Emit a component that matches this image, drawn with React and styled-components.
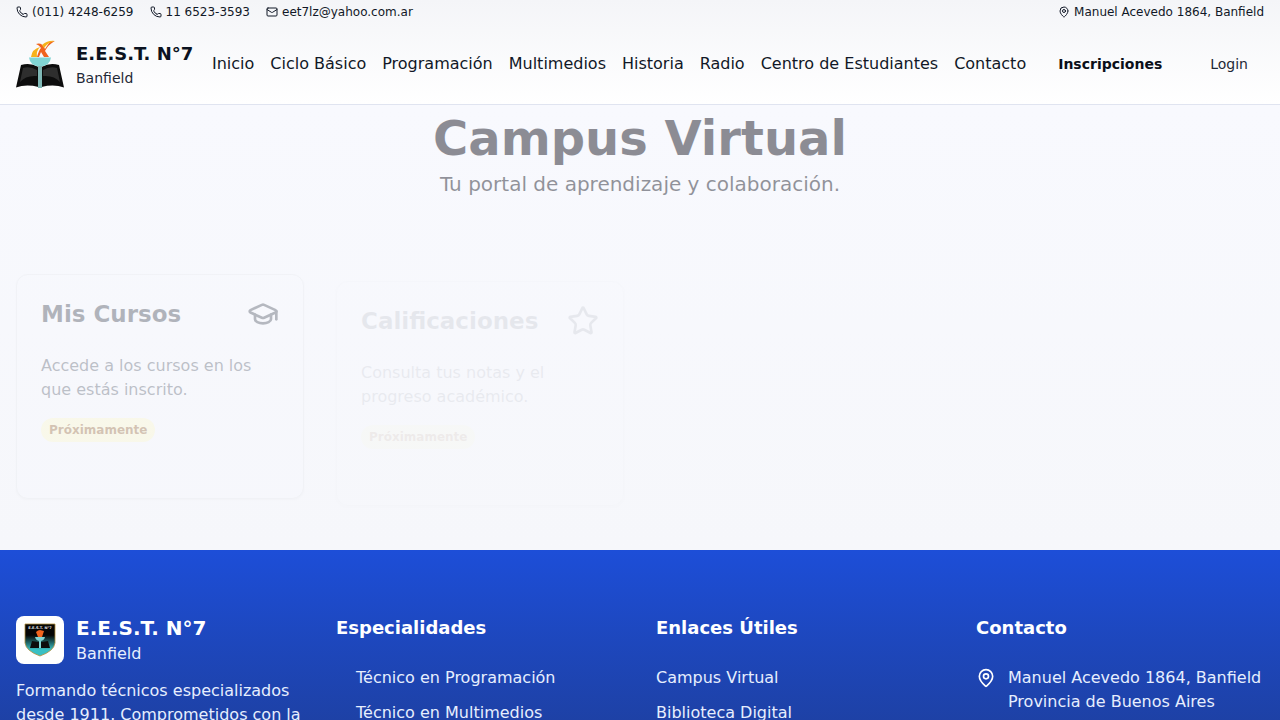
import React from "react";
import styled, { createGlobalStyle } from "styled-components";
import { GraduationCap, Mail, MapPin, Phone, Star } from "lucide-react";

const GlobalStyle = createGlobalStyle`
  * {
    box-sizing: border-box;
  }
  html,
  body {
    margin: 0;
    padding: 0;
    background: #f8f9fd;
    font-family: "DejaVu Sans", sans-serif;
    color: #111827;
  }
`;

const HeaderWrap = styled.header`
  background: linear-gradient(180deg, #f4f5f8 0%, #ffffff 100%);
  border-bottom: 1px solid #e0e4f0;
`;

const TopBar = styled.div`
  display: flex;
  justify-content: space-between;
  align-items: center;
  height: 24px;
  padding: 0 16px;
  font-size: 12px;
  color: #111827;
`;

const TopGroup = styled.div`
  display: flex;
  gap: 16px;
`;

const TopItem = styled.span`
  display: flex;
  align-items: center;
  gap: 4px;
`;

const NavBar = styled.nav`
  display: flex;
  align-items: center;
  height: 80px;
  padding: 0 16px;
`;

const Brand = styled.div`
  display: flex;
  align-items: center;
  gap: 12px;
  width: 196px;
`;

const BrandText = styled.div`
  display: flex;
  flex-direction: column;
`;

const BrandName = styled.span`
  font-size: ${({ $large }) => ($large ? "20px" : "18px")};
  line-height: 28px;
  font-weight: 700;
  color: ${({ $large }) => ($large ? "#ffffff" : "#0b1220")};
`;

const BrandPlace = styled.span`
  font-size: ${({ $large }) => ($large ? "16px" : "14px")};
  line-height: ${({ $large }) => ($large ? "24px" : "20px")};
  color: ${({ $large }) => ($large ? "#e6eefe" : "#1f2937")};
`;

const NavLinks = styled.div`
  display: flex;
  gap: 16px;
  font-size: 16px;
`;

const NavLink = styled.a`
  color: #111827;
  line-height: 24px;
`;

const NavActions = styled.div`
  display: flex;
  align-items: center;
  margin-left: auto;
  font-size: 14px;
  padding-right: 16px;
`;

const EnrollLink = styled.a`
  font-weight: 700;
  color: #0b0f19;
  margin-right: 48px;
`;

const LoginLink = styled.a`
  color: #1f2937;
`;

const Main = styled.main`
  height: 445px;
  padding: 9px 16px 0;
  background: linear-gradient(180deg, #f8f9fe 0%, #f6f7fb 100%);
`;

const Hero = styled.section`
  text-align: center;
  opacity: 0.47;
`;

const HeroTitle = styled.h1`
  margin: 0;
  font-size: 48px;
  line-height: 48px;
  font-weight: 700;
  color: #14141f;
`;

const HeroSub = styled.p`
  margin: 8px 0 0;
  font-size: 20px;
  line-height: 28px;
  color: #1d1f2c;
`;

const CardGrid = styled.div`
  display: grid;
  grid-template-columns: repeat(4, 1fr);
  gap: 32px;
  margin-top: 76px;
`;

const Card = styled.article`
  height: 225px;
  padding: 24px;
  background: #f9faff;
  border: 1px solid #e5e7eb;
  border-radius: 12px;
  box-shadow: 0 1px 2px rgba(0, 0, 0, 0.05);
  opacity: ${({ $fade }) => $fade};
  transform: translateY(${({ $shift }) => $shift}px);
`;

const CardHead = styled.div`
  display: flex;
  justify-content: space-between;
  align-items: center;
  height: 30px;
  margin-bottom: 25px;
  color: #1f2937;
`;

const CardTitle = styled.h2`
  margin: 0;
  font-size: 23px;
  line-height: 32px;
  font-weight: 700;
  color: #111827;
`;

const CardText = styled.p`
  margin: 0 0 16px;
  font-size: 16px;
  line-height: 24px;
  color: #374151;
`;

const Badge = styled.span`
  display: inline-block;
  padding: 0 8px;
  height: 24px;
  line-height: 24px;
  border-radius: 999px;
  background: #fef9c3;
  color: #854d0e;
  font-size: 12px;
  font-weight: 700;
`;

const Footer = styled.footer`
  padding: 66px 16px 48px;
  background: linear-gradient(180deg, #1d4ed8 0, #1e3a8a 265px);
  color: #e6eefe;
`;

const FooterGrid = styled.div`
  display: grid;
  grid-template-columns: repeat(4, 1fr);
  gap: 32px;
`;

const FooterBrand = styled.div`
  display: flex;
  align-items: center;
  gap: 12px;
  margin: 0 0 13px;
`;

const LogoTile = styled.div`
  display: flex;
  align-items: center;
  justify-content: center;
  width: 48px;
  height: 48px;
  background: #ffffff;
  border-radius: 8px;
`;

const FooterText = styled.p`
  margin: 0;
  font-size: 16px;
  line-height: 24px;
`;

const BrandColumn = styled.div`
  margin-top: -2px;
`;

const FooterTitle = styled.h3`
  margin: 0 0 26px;
  font-size: 18px;
  line-height: 24px;
  font-weight: 700;
  color: #ffffff;
`;

const FooterList = styled.ul`
  list-style: none;
  margin: 0;
  padding: 0 0 0 ${({ $indent }) => ($indent ? "20px" : "0")};
  display: flex;
  flex-direction: column;
  gap: 11px;
  font-size: 16px;
  line-height: 24px;
`;

const ContactRow = styled.div`
  display: flex;
  gap: 12px;
  font-size: 16px;
  line-height: 24px;
  & > svg {
    flex: none;
    margin-top: 2px;
    color: #ffffff;
  }
`;

function BookLogo() {
  return (
    <svg width="48" height="48" viewBox="0 0 48 48">
      <path d="M0 47.5 L5 25 Q14 22 22.5 27 L22.5 47 Q10 44 0 47.5Z" fill="#0d0d0d" />
      <path d="M48 47.5 L43 25 Q34 22 25.5 27 L25.5 47 Q38 44 48 47.5Z" fill="#0d0d0d" />
      <path d="M4 42 L7 28 Q14 26 21 30 L21 36 Q10 35 4 42Z" fill="#2e2e2e" />
      <path d="M44 42 L41 28 Q34 26 27 30 L27 36 Q38 35 44 42Z" fill="#2e2e2e" />
      <path d="M13 17.5 H35 Q34 26 24 26.5 Q14 26 13 17.5Z" fill="#80d5d4" />
      <rect x="22" y="26" width="4" height="23" fill="#7fb8b6" />
      <path d="M15 17 Q16 9 24 7 Q20 11 21 17Z" fill="#f6b21b" />
      <path d="M20 4 Q26 2 29 9 L34 1.5 Q40 0.5 38 1.5 Q32 5 29 11 L33 17 H28 L25 12 L23 17 H21 Q23 10 25 8 Q23 5 20 4Z" fill="#f0641e" />
      <path d="M26 5 Q32 0 39 1 Q32 2 28 8Z" fill="#f6b21b" />
    </svg>
  );
}

function ShieldLogo() {
  return (
    <svg width="32" height="34" viewBox="0 0 32 34">
      <defs>
        <linearGradient id="shieldFill" x1="0" y1="0" x2="0" y2="1">
          <stop offset="0.35" stopColor="#060606" />
          <stop offset="0.8" stopColor="#39c0c4" />
        </linearGradient>
      </defs>
      <path d="M1 1 H31 V20 Q30 28 16 33 Q2 28 1 20Z" fill="url(#shieldFill)" stroke="#b08d3a" strokeWidth="0.8" />
      <text x="16" y="6" textAnchor="middle" fontSize="3.6" fontWeight="700" fill="#e8e8e8">E.E.S.T. N°7</text>
      <path d="M12 9 Q14 7 16 7 L20 8 L18 14 H14Z" fill="#f0641e" />
      <path d="M11 14 H21 Q20 18 16 18 Q12 18 11 14Z" fill="#80d5d4" />
      <rect x="15" y="18" width="2" height="7" fill="#80d5d4" />
      <path d="M6 25 L8 18 L15 19 V25Z M26 25 L24 18 L17 19 V25Z" fill="#0d0d0d" />
    </svg>
  );
}

export default function App() {
  return (
    <>
      <GlobalStyle />
      <HeaderWrap>
        <TopBar>
          <TopGroup>
            <TopItem>
              <Phone size={12} />
              (011) 4248-6259
            </TopItem>
            <TopItem>
              <Phone size={12} />
              11 6523-3593
            </TopItem>
            <TopItem>
              <Mail size={12} />
              eet7lz@yahoo.com.ar
            </TopItem>
          </TopGroup>
          <TopItem>
            <MapPin size={12} />
            Manuel Acevedo 1864, Banfield
          </TopItem>
        </TopBar>
        <NavBar>
          <Brand>
            <BookLogo />
            <BrandText>
              <BrandName>E.E.S.T. N°7</BrandName>
              <BrandPlace>Banfield</BrandPlace>
            </BrandText>
          </Brand>
          <NavLinks>
            <NavLink>Inicio</NavLink>
            <NavLink>Ciclo Básico</NavLink>
            <NavLink>Programación</NavLink>
            <NavLink>Multimedios</NavLink>
            <NavLink>Historia</NavLink>
            <NavLink>Radio</NavLink>
            <NavLink>Centro de Estudiantes</NavLink>
            <NavLink>Contacto</NavLink>
          </NavLinks>
          <NavActions>
            <EnrollLink>Inscripciones</EnrollLink>
            <LoginLink>Login</LoginLink>
          </NavActions>
        </NavBar>
      </HeaderWrap>
      <Main>
        <Hero>
          <HeroTitle>Campus Virtual</HeroTitle>
          <HeroSub>Tu portal de aprendizaje y colaboración.</HeroSub>
        </Hero>
        <CardGrid>
          <Card $fade={0.3} $shift={0}>
            <CardHead>
              <CardTitle>Mis Cursos</CardTitle>
              <GraduationCap size={32} />
            </CardHead>
            <CardText>Accede a los cursos en los que estás inscrito.</CardText>
            <Badge>Próximamente</Badge>
          </Card>
          <Card $fade={0.07} $shift={7}>
            <CardHead>
              <CardTitle>Calificaciones</CardTitle>
              <Star size={32} />
            </CardHead>
            <CardText>Consulta tus notas y el progreso académico.</CardText>
            <Badge>Próximamente</Badge>
          </Card>
        </CardGrid>
      </Main>
      <Footer>
        <FooterGrid>
          <BrandColumn>
            <FooterBrand>
              <LogoTile>
                <ShieldLogo />
              </LogoTile>
              <BrandText>
                <BrandName $large>E.E.S.T. N°7</BrandName>
                <BrandPlace $large>Banfield</BrandPlace>
              </BrandText>
            </FooterBrand>
            <FooterText>
              Formando técnicos especializados desde 1911. Comprometidos con la
              educación pública.
            </FooterText>
          </BrandColumn>
          <div>
            <FooterTitle>Especialidades</FooterTitle>
            <FooterList $indent>
              <li>Técnico en Programación</li>
              <li>Técnico en Multimedios</li>
            </FooterList>
          </div>
          <div>
            <FooterTitle>Enlaces Útiles</FooterTitle>
            <FooterList>
              <li>Campus Virtual</li>
              <li>Biblioteca Digital</li>
            </FooterList>
          </div>
          <div>
            <FooterTitle>Contacto</FooterTitle>
            <ContactRow>
              <MapPin size={20} />
              <span>
                Manuel Acevedo 1864, Banfield
                <br />
                Provincia de Buenos Aires
              </span>
            </ContactRow>
          </div>
        </FooterGrid>
      </Footer>
    </>
  );
}
